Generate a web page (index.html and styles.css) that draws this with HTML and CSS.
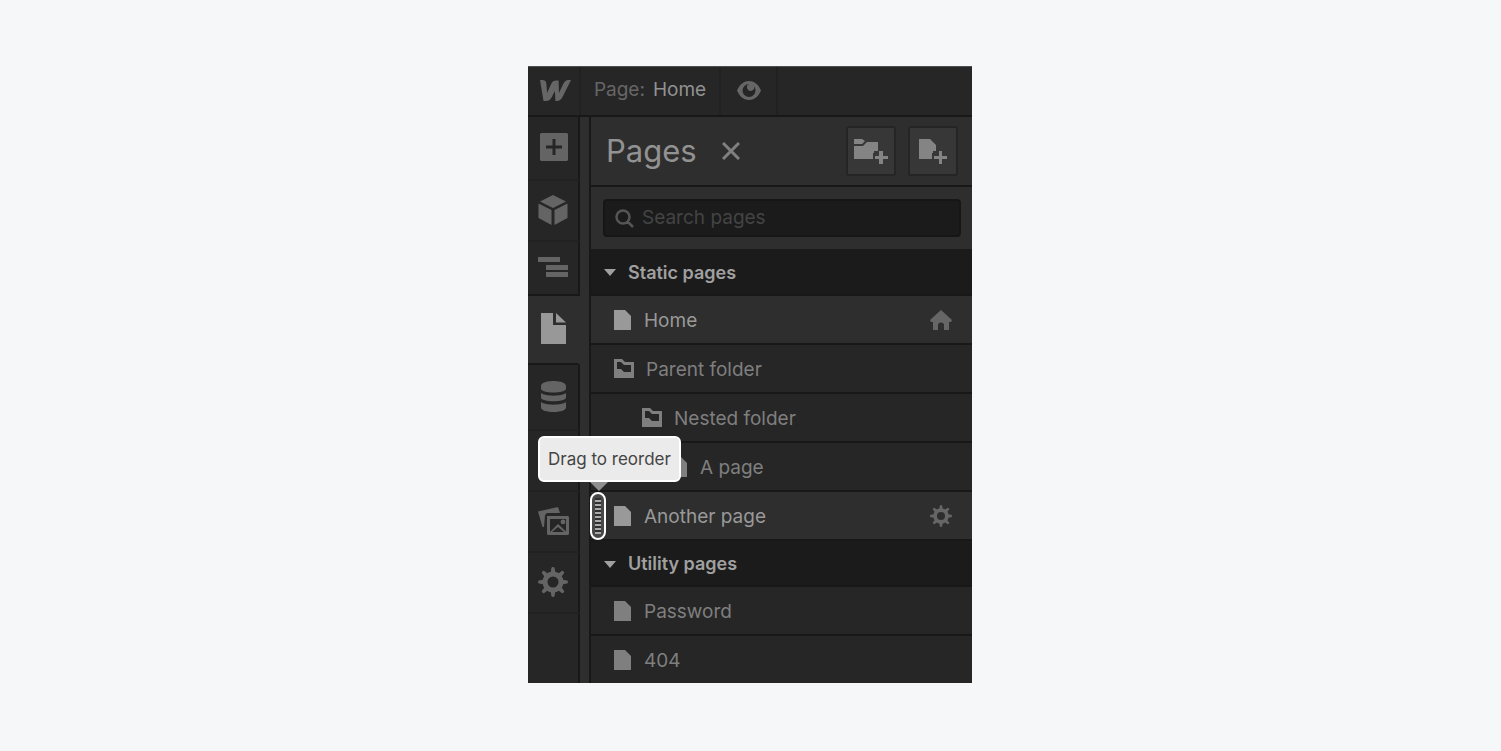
FILE: index.html
```html
<!DOCTYPE html>
<html lang="en">
<head>
    <meta charset="UTF-8">
    <meta name="viewport" content="width=device-width, initial-scale=1.0">
    <title>Pages</title>
    <link rel="stylesheet" href="styles.css">
</head>
<body>

    <!-- Shared icons -->
    <svg class="sprite" aria-hidden="true">
        <symbol id="page" viewBox="0 0 17 20">
            <path d="M0 0h11l6 6v14H0z"/>
        </symbol>
        <symbol id="folder" viewBox="0 0 20 19">
            <path fill-rule="evenodd" d="M0 0h8l3 3h9v16H0zM3 3v7h4l3 3h7V6h-7L7 3z"/>
        </symbol>
        <symbol id="caret" viewBox="0 0 12 7">
            <path d="M0 0h12L6 7z"/>
        </symbol>
        <symbol id="gear" viewBox="0 0 30 30">
            <circle cx="15" cy="15" r="8" fill="none" stroke="currentColor" stroke-width="5"/>
            <g id="teeth">
                <path d="M12.6 6 13.4 1Q13.6 0 15 0t1.6 1l.8 5zM12.6 24l.8 5q.2 1 1.6 1t1.6-1l.8-5zM6 12.6 1 13.4Q0 13.6 0 15t1 1.6l5 .8zM24 12.6l5 .8q1 .2 1 1.6t-1 1.6l-5 .8z"/>
            </g>
            <use href="#teeth" transform="rotate(45 15 15)"/>
        </symbol>
    </svg>

    <div class="designer">
        <header class="topbar">
            <a class="logo" href="#" aria-label="Dashboard">
                <svg width="31" height="21" viewBox="0 0 31 21"><path d="M0 0h2c3 0 4.200 1.400 4.400 4l.7 9 4-9C12.300 1.200 14 .5 16 .5h2.600l.4 12.500 4.200-9C24.800 1.200 26 0 28.500 0H31l-8 16C21.500 19.400 19.700 21 16.600 21h-1.200l-.5-10-3.300 6.500C10.200 20 8.500 21 6 21H3.500z"/></svg>
            </a>
            <button class="current-page">Page: <span>Home</span></button>
            <button class="preview" aria-label="Preview">
                <svg width="24" height="19" viewBox="0 0 24 19"><path fill-rule="evenodd" d="M12 0C18 0 22 4.500 24 9.500 22 14.500 18 19 12 19S2 14.500 0 9.500C2 4.500 6 0 12 0zM12 3a6.500 6.500 0 1 0 6.500 6.500c0-1.600-.6-3-1.500-4.200a3.600 3.600 0 1 1-4.800-2.300z"/></svg>
            </button>
        </header>

        <div class="workspace">
            <nav class="sidebar">
                <button class="tool add" aria-label="Add elements">
                    <svg width="28" height="28" viewBox="0 0 28 28"><path fill-rule="evenodd" d="M1 0h26l1 1v26l-1 1H1l-1-1V1zM12.500 6v6.500H6v3h6.500V22h3v-6.500H22v-3h-6.500V6z"/></svg>
                </button>
                <button class="tool symbols" aria-label="Symbols">
                    <svg width="30" height="30" viewBox="0 0 30 30"><path d="M15 0l13 6.500L15 13 2 6.500zM.5 8.500 13.500 15v15L.5 23zM29.500 8.500 16.500 15v15l13-7z"/></svg>
                </button>
                <button class="tool navigator" aria-label="Navigator">
                    <svg width="30" height="20" viewBox="0 0 30 20"><path d="M0 0h22v5H0zM8 8h22v5H8zM8 15h22v5H8z"/></svg>
                </button>
                <button class="tool pages active" aria-label="Pages">
                    <svg width="25" height="31" viewBox="0 0 25 31"><path d="M0 0h12v12h13v19H0zM15 0l10 9.500H15z"/></svg>
                </button>
                <button class="tool cms" aria-label="CMS collections">
                    <svg width="25" height="31" viewBox="0 0 25 31"><path d="M0 5c0-6.700 25-6.700 25 0v2.500c0 5.300-25 5.300-25 0zM0 12c4 3.500 21 3.500 25 0v4.500c0 5-25 5-25 0zM0 21c4 3.500 21 3.500 25 0v5.500c0 6-25 6-25 0z"/></svg>
                </button>
                <button class="tool ecommerce" aria-label="Ecommerce">
                    <svg width="30" height="26" viewBox="0 0 30 26"><path d="M0 0h6l2 4h21l-4 13H9L4 3H0z"/></svg>
                </button>
                <button class="tool assets" aria-label="Assets">
                    <svg width="31" height="28" viewBox="0 0 31 28"><path fill-rule="evenodd" d="M0 4.500 20 0l2 6H9L7 8l-1 12H4.500zM9 9h21l1 1v17l-1 1H10l-1-1zM12 12v13l8-8 8 7.500V12zM25 12.500a2.400 2.400 0 1 1 0 4.800 2.400 2.400 0 0 1 0-4.800zM14 25h12l-6-5z"/></svg>
                </button>
                <button class="tool settings" aria-label="Settings">
                    <svg width="30" height="30"><use href="#gear"/></svg>
                </button>
            </nav>

            <main class="panel">
                <div class="panel-header">
                    <h1>Pages</h1>
                    <button class="close" aria-label="Close">
                        <svg width="18" height="18" viewBox="0 0 18 18"><path d="M1 1l16 16M17 1L1 17" stroke="currentColor" stroke-width="3"/></svg>
                    </button>
                    <button class="create" aria-label="New folder">
                        <svg width="36" height="26" viewBox="0 0 36 26"><path d="M1 1h8l3 2-3 3H1zM1 8h9l4-4h11v9h-4v2h-1v6H1zM26 13h4v5h5v3h-5v5h-4v-5h-4v-3h4z"/></svg>
                    </button>
                    <button class="create" aria-label="New page">
                        <svg width="36" height="26" viewBox="0 0 36 26"><path d="M4 1h11l6 6v6h-3v2h-1v6H4zM24 13h3v5h5v3h-5v5h-3v-5h-5v-3h5z"/></svg>
                    </button>
                </div>

                <div class="search">
                    <label class="search-box">
                        <svg width="19" height="19" viewBox="0 0 19 19"><path fill="none" stroke="currentColor" stroke-width="2.500" d="M12.500 12.500l5.500 5.500M14.500 8A6.500 6.500 0 1 1 1.500 8a6.500 6.500 0 0 1 13 0z"/></svg>
                        <input type="search" placeholder="Search pages" aria-label="Search pages">
                    </label>
                </div>

                <h2><svg width="12" height="7"><use href="#caret"/></svg>Static pages</h2>
                <ul>
                    <li class="row highlight">
                        <svg width="17" height="20"><use href="#page"/></svg>
                        <a href="#">Home</a>
                        <svg class="row-end" width="22" height="20" viewBox="0 0 22 20"><path d="M11 0l11 10-1 2h-2v8h-5v-5q0-2.500-3-2.500T8 15v5H3v-8H1l-1-2z"/></svg>
                    </li>
                    <li class="row folder">
                        <svg width="20" height="19"><use href="#folder"/></svg>
                        <a href="#">Parent folder</a>
                    </li>
                    <li class="row folder nested">
                        <svg width="20" height="19"><use href="#folder"/></svg>
                        <a href="#">Nested folder</a>
                    </li>
                    <li class="row nested-page">
                        <svg width="17" height="20"><use href="#page"/></svg>
                        <a href="#">A page</a>
                    </li>
                    <li class="row highlight">
                        <button class="handle" aria-label="Drag to reorder"><span class="grip"></span></button>
                        <div class="tooltip" role="tooltip">Drag to reorder</div>
                        <svg width="17" height="20"><use href="#page"/></svg>
                        <a href="#">Another page</a>
                        <button class="row-end" aria-label="Page settings">
                            <svg width="22" height="22"><use href="#gear"/></svg>
                        </button>
                    </li>
                </ul>

                <h2><svg width="12" height="7"><use href="#caret"/></svg>Utility pages</h2>
                <ul>
                    <li class="row">
                        <svg width="17" height="20"><use href="#page"/></svg>
                        <a href="#">Password</a>
                    </li>
                    <li class="row last">
                        <svg width="17" height="20"><use href="#page"/></svg>
                        <a href="#">404</a>
                    </li>
                </ul>
            </main>
        </div>
    </div>

</body>
</html>
```
FILE: styles.css
```css
* {
    box-sizing: border-box;
    margin: 0;
    padding: 0;
}

body {
    display: flex;
    justify-content: center;
    align-items: flex-start;
    min-height: 100vh;
    padding: 66px 1px 66px 0;
    background: #f5f7f9;
    color: #7f7f7f;
    font-family: "Inter", sans-serif;
    font-size: 19px;
    line-height: 24px;
}

svg {
    display: block;
    flex-shrink: 0;
    fill: currentColor;
}

button {
    background: none;
    border: none;
    color: inherit;
    font: inherit;
    cursor: pointer;
}

a {
    color: inherit;
    text-decoration: none;
}

ul {
    list-style: none;
}

.sprite {
    position: absolute;
    width: 0;
    height: 0;
}

.designer {
    width: 100%;
    max-width: 444px;
    background: #262626;
}

/* Top bar */
.topbar {
    display: flex;
    height: 51px;
    border-top: 1px solid #4b504e;
    border-bottom: 2px solid #181818;
    color: #666;
}

.topbar > * {
    display: flex;
    align-items: center;
    justify-content: center;
    padding-bottom: 2px;
    border-right: 2px solid #212121;
}

.topbar .logo {
    width: 53px;
    padding-left: 3px;
}

.current-page {
    gap: 8px;
    width: 140px;
}

.current-page span {
    color: #929292;
}

.preview {
    width: 57px;
}

.workspace {
    display: flex;
    background: #2e2e2e;
}

/* Left tool bar */
.sidebar {
    display: flex;
    flex-direction: column;
    width: 63px;
    padding-right: 9px;
    border-right: 2px solid #181818;
    background: linear-gradient(to right, #262626 50px, #181818 50px, #181818 52px, #2e2e2e 52px);
}

.tool {
    display: flex;
    align-items: center;
    justify-content: center;
    height: 61px;
    padding-bottom: 2px;
    border-right: 2px solid #181818;
    border-bottom: 2px solid #212121;
    color: #646464;
}

.tool.add {
    height: 64px;
    padding-left: 2px;
}

.tool.navigator {
    height: 54px;
    border-bottom-color: #181818;
}

.tool.active {
    height: 69px;
    background: #2e2e2e;
    border-right-color: #2e2e2e;
    border-bottom-color: #181818;
    color: #989898;
}

.tool.cms {
    height: 66px;
}

/* Pages panel */
.panel {
    flex: 1;
    min-width: 0;
}

.panel-header {
    display: flex;
    align-items: center;
    gap: 12px;
    height: 70px;
    padding: 0 14px 0 15px;
    border-bottom: 2px solid #181818;
}

h1 {
    color: #929292;
    font-size: 31px;
    font-weight: 400;
    line-height: 40px;
}

.close {
    margin: 0 auto 0 13px;
    color: #808080;
}

.create {
    display: flex;
    align-items: center;
    justify-content: center;
    width: 50px;
    height: 50px;
    border: 2px solid #252525;
    border-radius: 3px;
    background: #373737;
    color: #848484;
}

.search {
    padding: 12px 11px 12px 12px;
}

.search-box {
    display: flex;
    align-items: center;
    gap: 8px;
    height: 38px;
    padding: 0 10px;
    border: 2px solid #161616;
    border-radius: 4px;
    background: #1b1b1b;
    color: #555;
}

input {
    flex: 1;
    min-width: 0;
    border: none;
    outline: none;
    background: none;
    color: #929292;
    font: inherit;
}

input::placeholder {
    color: #444;
}

h2 {
    display: flex;
    align-items: center;
    gap: 12px;
    height: 47px;
    padding: 2px 0 0 13px;
    border-bottom: 2px solid #181818;
    background: #1b1b1b;
    color: #a0a0a0;
    font-size: 18px;
    font-weight: 600;
}

ul + h2 {
    height: 46px;
}

.row {
    display: flex;
    position: relative;
    align-items: center;
    gap: 13px;
    height: 49px;
    padding: 0 20px 0 23px;
    border-bottom: 2px solid #181818;
    background: #262626;
}

.row a {
    padding-top: 2px;
}

.row.last {
    height: 47px;
    border-bottom: none;
}

.highlight {
    background: #2e2e2e;
    color: #999;
}

.folder {
    gap: 12px;
}

.nested {
    padding-left: 51px;
}

.nested-page {
    padding-left: 79px;
}

.row-end {
    margin-left: auto;
    color: #666;
}

/* Drag handle and its tooltip */
.handle {
    position: absolute;
    top: 0;
    left: -1px;
    width: 16px;
    height: 48px;
    padding: 4px 3px;
    border: 2px solid #fff;
    border-radius: 8px;
    background: #484848;
}

.grip {
    display: block;
    height: 36px;
    background: repeating-linear-gradient(#303030 0 2px, #aaa 2px 4px);
}

.tooltip {
    position: absolute;
    bottom: 57px;
    left: -53px;
    padding: 9px 8px;
    border: 2px solid #fff;
    border-radius: 6px;
    background: #ebebeb;
    color: #444;
    font-size: 17px;
    white-space: nowrap;
}

.tooltip::after {
    content: "";
    position: absolute;
    top: 100%;
    left: 50px;
    margin-top: 2px;
    border: 9px solid transparent;
    border-top-color: #8f8f8f;
    border-bottom: none;
}
```
